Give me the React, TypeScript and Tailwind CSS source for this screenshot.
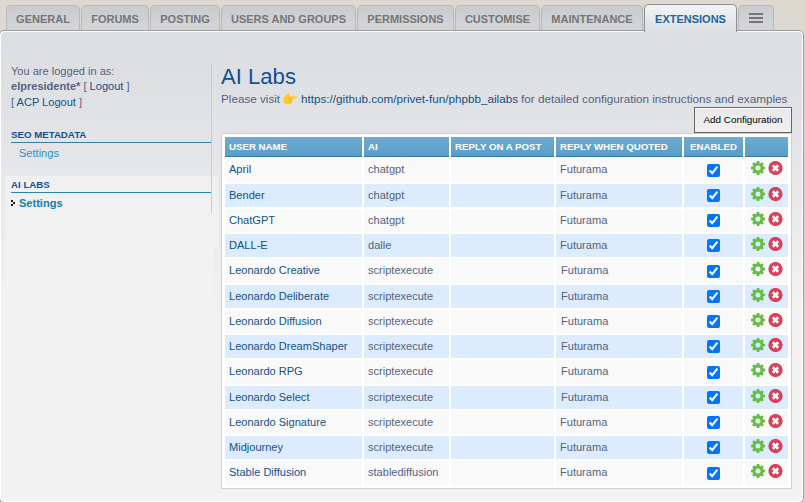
import React from "react";

const TABS = [
  { label: "GENERAL", w: "w-[74px]" },
  { label: "FORUMS", w: "w-[68px]" },
  { label: "POSTING", w: "w-[70px]" },
  { label: "USERS AND GROUPS", w: "w-[135px]" },
  { label: "PERMISSIONS", w: "w-[97px]" },
  { label: "CUSTOMISE", w: "w-[85px]" },
  { label: "MAINTENANCE", w: "w-[102px]" },
];

const ROWS: [string, string][] = [
  ["April", "chatgpt"],
  ["Bender", "chatgpt"],
  ["ChatGPT", "chatgpt"],
  ["DALL-E", "dalle"],
  ["Leonardo Creative", "scriptexecute"],
  ["Leonardo Deliberate", "scriptexecute"],
  ["Leonardo Diffusion", "scriptexecute"],
  ["Leonardo DreamShaper", "scriptexecute"],
  ["Leonardo RPG", "scriptexecute"],
  ["Leonardo Select", "scriptexecute"],
  ["Leonardo Signature", "scriptexecute"],
  ["Midjourney", "scriptexecute"],
  ["Stable Diffusion", "stablediffusion"],
];

const COLS = "grid grid-cols-[137px_85px_103px_126px_59px_43px] gap-x-[2px]";

function Gear() {
  const teeth = [0, 45, 90, 135, 180, 225, 270, 315];
  return (
    <svg width="14" height="14" viewBox="0 0 14 14" className="block">
      {teeth.map((a) => (
        <path key={a} d="M5.3 3 L5.7 0 H8.3 L8.7 3 Z" fill="#64bd45" transform={`rotate(${a} 7 7)`} />
      ))}
      <circle cx="7" cy="7" r="3.9" fill="none" stroke="#64bd45" strokeWidth="2.8" />
    </svg>
  );
}

function Cross() {
  return (
    <svg width="15" height="14" viewBox="0 0 15 14" className="block">
      <circle cx="7.5" cy="7" r="7.1" fill="#d9415a" />
      <path d="M4.8 4.3 L10.2 9.7 M10.2 4.3 L4.8 9.7" stroke="#f8f8fa" strokeWidth="2.7" />
    </svg>
  );
}

function SectionTitle({ children }: { children: React.ReactNode }) {
  return (
    <div className="shrink-0">
      <div className="h-[14px] text-[9.7px] leading-[13px] font-bold text-[#115098]">{children}</div>
      <div className="h-px bg-[#2f7fb0]" />
    </div>
  );
}

export default function App() {
  return (
    <div className="h-[502px] w-[805px] overflow-hidden bg-[#dcd9d1] font-['Liberation_Sans',Arial,sans-serif] text-[11.05px] text-[#536482]">
      <nav className="flex h-[30px] items-end gap-px pl-[6px] text-[11px] font-bold text-[#767676]">
        {TABS.map((t) => (
          <div
            key={t.label}
            className={`${t.w} h-[25px] shrink-0 rounded-t-[5px] border border-b-0 border-[#b9b9b9] bg-linear-to-b from-[#cacbcf] to-[#d5d6da] text-center leading-[27px] whitespace-nowrap`}
          >
            {t.label}
          </div>
        ))}
        <div className="relative z-10 -mb-[2px] h-[28px] w-[93px] shrink-0 rounded-t-[5px] border border-b-0 border-[#8f8f8f] bg-linear-to-b from-[#f4f4f5] to-[#dbdfe2] text-center leading-[29px] text-[#23649f]">
          EXTENSIONS
        </div>
        <div className="flex h-[25px] w-[36px] shrink-0 flex-col items-center gap-[2px] rounded-t-[5px] border border-b-0 border-[#b9b9b9] bg-linear-to-b from-[#cacbcf] to-[#d5d6da] pt-[7px]">
          <span className="h-[2px] w-[14px] bg-[#767676]" />
          <span className="h-[2px] w-[14px] bg-[#767676]" />
          <span className="h-[2px] w-[14px] bg-[#767676]" />
        </div>
      </nav>

      <div className="-ml-px h-[473px] w-[805px] rounded-[5px] border border-[#999999] bg-white p-px">
        <div className="flex h-[469px] rounded-[4px] bg-[linear-gradient(to_bottom,#dadfe2_0px,#dedfe3_25px,#dedfe3_40px,#e5e6e9_130px,#f2f2f2_280px)]">
          <aside className="w-[216px] shrink-0 pt-[32px] pl-[4px]">
            <div className="h-[149px] w-[207px] border-r border-[#c8cbcf]">
              <div className="pl-[6px] leading-[15px]">
                <p>You are logged in as:</p>
                <p>
                  <b>elpresidente*</b> [ <span className="text-[#105289]">Logout</span> ]
                </p>
                <p className="leading-[17px]">
                  [ <span className="text-[#105289]">ACP Logout</span> ]
                </p>
              </div>
              <div className="mt-[17px] ml-[6px]">
                <SectionTitle>SEO METADATA</SectionTitle>
                <p className="h-[33px] pl-[8px] leading-[20px] text-[#2a90c9]">Settings</p>
              </div>
              <div className="h-[72px] w-[213px] bg-linear-to-b from-[#eff0ef] to-[#f2f2f2]">
                <div className="flex h-[37px] w-[207px] flex-col border-r border-[#c8cbcf] pl-[6px]">
                  <div className="h-[2px] shrink-0" />
                  <SectionTitle>AI LABS</SectionTitle>
                  <div className="flex h-[20px] items-center text-[#0f7fb5]">
                    <svg width="8" height="7" viewBox="0 0 8 7" className="shrink-0">
                      <path d="M0 0h2v2H0zM2 2h2v2H2zM0 4h2v2H0z" fill="#1c1c1c" />
                    </svg>
                    <b>Settings</b>
                  </div>
                </div>
              </div>
              <div className="h-[66px] w-[208px] bg-[#f2f2f2]" />
            </div>
          </aside>

          <main className="ml-[4px] w-[571px] shrink-0">
            <h1 className="mt-[31px] h-[28px] text-[22.1px] leading-[28px] text-[#115098]">AI Labs</h1>
            <div className="flex h-[16px] items-center text-[11.7px] whitespace-nowrap">
              <span className="w-[62px] shrink-0">Please visit</span>
              <svg width="14" height="12" viewBox="0 0 14 12" className="mr-[4px] shrink-0">
                <path
                  d="M0.5 4.2 L4.6 1.1 C5.5 0.2 7 0.2 6.7 1.4 L6 3.2 H12.6 C14.2 3.2 14.2 5.5 12.6 5.5 H9.3 C10.2 6 10 7.5 9.1 7.6 C9.6 8.3 9.2 9.4 8.4 9.5 C8.5 10.8 7.7 11.3 6.7 11.3 H3.8 C2 11.3 0.5 10 0.5 8.6 Z"
                  fill="#ffc928"
                />
                <path d="M5.8 5.5H9.3M6 7.6H9M6 9.5H8.3" stroke="#e9a419" strokeWidth="0.6" />
              </svg>
              <span className="text-[#105289]">https://github.com/privet-fun/phpbb_ailabs</span>
              <span className="ml-[3px]">for detailed configuration instructions and examples</span>
            </div>
            <div className="flex h-[26px] justify-end">
              <button className="h-[26px] w-[98px] border border-[#666666] bg-linear-to-b from-[#e9e9e9] to-[#f0f0f0] text-[9.9px] leading-[24px] text-black shadow-[inset_0_1px_0_#ffffff]">
                Add Configuration
              </button>
            </div>

            <div className="h-[356px] w-[571px] border border-[#cccfd3] bg-white p-[3px]">
              <div className={`${COLS} h-[19px] text-[9.7px] leading-[19px] font-bold whitespace-nowrap text-white`}>
                {["USER NAME", "AI", "REPLY ON A POST", "REPLY WHEN QUOTED", "ENABLED", ""].map((h, i) => (
                  <div
                    key={i}
                    className={`${i === 4 ? "text-center" : "pl-[4px]"} border-b border-[#327aa5] bg-linear-to-b from-[#6cacd3] to-[#5a9dc6]`}
                  >
                    {h}
                  </div>
                ))}
              </div>
              <div className="mt-[2.3px] flex flex-col gap-[2px]">
                {ROWS.map(([name, ai], i) => {
                  const bg = i % 2 ? "bg-[#dcebfe]" : "bg-[#f9f9f9]";
                  return (
                    <div key={name} className={`${COLS} h-[23.25px] leading-[22px] whitespace-nowrap`}>
                      <div className={`${bg} pl-[4px] text-[#105289]`}>{name}</div>
                      <div className={`${bg} pl-[4px]`}>{ai}</div>
                      <div className={bg} />
                      <div className={`${bg} ${i > 3 && i < 10 ? "pl-[5px]" : "pl-[4px]"}`}>Futurama</div>
                      <div className={`${bg} flex justify-center pt-[5.4px]`}>
                        <input type="checkbox" defaultChecked className="m-0 block h-[13px] w-[13px]" />
                      </div>
                      <div className={`${bg} flex gap-[2.5px] pt-[3px] pl-[6px]`}>
                        <Gear />
                        <Cross />
                      </div>
                    </div>
                  );
                })}
              </div>
            </div>
          </main>
        </div>
      </div>
    </div>
  );
}
